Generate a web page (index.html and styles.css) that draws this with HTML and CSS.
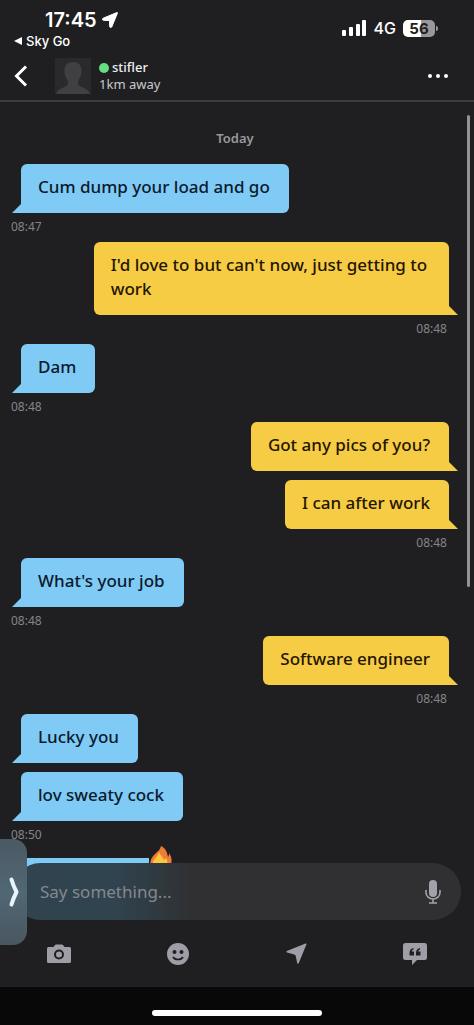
FILE: index.html
```html
<!DOCTYPE html>
<html lang="en">
<head>
<meta charset="utf-8">
<meta name="viewport" content="width=device-width, initial-scale=1">
<title>Chat</title>
<link rel="stylesheet" href="styles.css">
</head>
<body>
<div class="app">
  <header class="header">
    <div class="status">
      <div class="status-left">
        <div class="clock">17:45
          <svg width="16" height="16" viewBox="0 0 16 16" aria-hidden="true"><path d="M15.400 1.200 9.800 14.800c-.5 1.200-2 1-2.100-.3L7.500 8.500 1.500 8.300C.200 8.200 0 6.700 1.200 6.200L14.800.600c.5-.2.800.1.600.600z" fill="#fff" stroke="#fff" stroke-width="1" stroke-linejoin="round"/></svg>
        </div>
        <a class="return" href="#"><svg width="8" height="8" viewBox="0 0 8 8" aria-hidden="true"><path d="M8 0v8L0 4z" fill="#fff"/></svg>Sky Go</a>
      </div>
      <div class="status-right">
        <svg width="25" height="16" viewBox="0 0 25 16" aria-hidden="true"><g fill="#fff"><rect x="0" y="10" width="4" height="6" rx="1"/><rect x="7" y="7" width="4" height="9" rx="1"/><rect x="14" y="4" width="4" height="12" rx="1"/><rect x="20" y="0" width="4" height="16" rx="1"/></g></svg>
        <span class="network">4G</span>
        <span class="battery">56</span>
      </div>
    </div>
    <div class="nav">
      <button class="icon-button back" aria-label="Back"><svg width="14" height="22" viewBox="0 0 14 22"><path d="M12 1.500 2.500 11l9.500 9.500" fill="none" stroke="#fff" stroke-width="3"/></svg></button>
      <div class="avatar"><svg width="36" height="36" viewBox="0 0 36 36" aria-hidden="true"><path d="M18 4c-6 0-9 4-8.500 10 .2 2.500 1 5 2.500 7 1 2 1.500 5 0 6.500C9 30 3 30 1 36h34c-2-6-8-6-11-8.500-1.500-1.500-1-4.500 0-6.500 1.500-2 2.300-4.500 2.500-7C27 8 24 4 18 4z" fill="#404042"/></svg></div>
      <div class="person">
        <div class="name"><span class="online"></span>stifler</div>
        <div class="distance">1km away</div>
      </div>
      <button class="icon-button" aria-label="More"><svg width="22" height="6" viewBox="0 0 22 6"><g fill="#fff"><circle cx="3" cy="3" r="2"/><circle cx="11" cy="3" r="2"/><circle cx="19" cy="3" r="2"/></g></svg></button>
    </div>
  </header>

  <main class="chat">
    <h2 class="day">Today</h2>
    <section class="group received"><p class="bubble">Cum dump your load and go</p><time class="time">08:47</time></section>
    <section class="group sent"><p class="bubble">I'd love to but can't now, just getting to work</p><time class="time">08:48</time></section>
    <section class="group received"><p class="bubble">Dam</p><time class="time">08:48</time></section>
    <section class="group sent"><p class="bubble">Got any pics of you?</p><p class="bubble">I can after work</p><time class="time">08:48</time></section>
    <section class="group received"><p class="bubble">What's your job</p><time class="time">08:48</time></section>
    <section class="group sent"><p class="bubble">Software engineer</p><time class="time">08:48</time></section>
    <section class="group received"><p class="bubble">Lucky you</p><p class="bubble">lov sweaty cock</p><time class="time">08:50</time></section>
    <section class="group received reacted">
      <div class="bubble covered">
        <svg class="flame" width="22" height="26" viewBox="0 0 22 26" aria-hidden="true"><path d="M11 0c4 2 6 5 7 11 1-1 1-3 1-4 3 4 3 8 2 12-1 4-5 7-10 7S1 23 .500 19C0 14 2 11 5 8c3-3 5-4 6-8z" fill="#ef7c36"/><path d="M9 6c1 3 4 5 5 8l2-2c3 5 2 13-5 13C5 25 2 21 3 16c1-4 5-5 6-10z" fill="#fbc640"/></svg>
      </div>
    </section>
    <div class="scrollbar"></div>
  </main>

  <footer class="composer">
    <div class="field">
      <input class="message" type="text" placeholder="Say something..." aria-label="Message">
      <button class="icon-button" aria-label="Record"><svg width="16" height="24" viewBox="0 0 16 24"><rect x="4" y="0" width="8" height="17" rx="4" fill="#a3a2aa"/><path d="M1 10v2.500a7 6.500 0 0 0 14 0V10M8 19v4M4 23h8" fill="none" stroke="#a3a2aa" stroke-width="1.600"/></svg></button>
    </div>
    <div class="tools">
      <button class="icon-button" aria-label="Camera"><svg width="24" height="20" viewBox="0 0 24 20"><path fill="#9f9ea6" fill-rule="evenodd" d="M1.500 3H6.500L8 1Q8.500.500 9.200.500H14.800Q15.500.500 16 1L17.500 3H22.500Q24 3 24 4.500V17.500Q24 19 22.500 19H1.500Q0 19 0 17.500V4.500Q0 3 1.500 3zM12 5.500a5 5 0 1 0 0 10 5 5 0 0 0 0-10zm0 2a3 3 0 1 1 0 6 3 3 0 0 1 0-6z"/></svg></button>
      <button class="icon-button" aria-label="Stickers"><svg width="22" height="22" viewBox="0 0 22 22"><circle cx="11" cy="11" r="11" fill="#9f9ea6"/><circle cx="7.500" cy="9" r="2" fill="#1f1f21"/><circle cx="14.500" cy="9" r="2" fill="#1f1f21"/><path d="M6 14c2 3.300 8 3.300 10 0" fill="none" stroke="#1f1f21" stroke-width="1.700"/></svg></button>
      <button class="icon-button" aria-label="Location"><svg width="21" height="21" viewBox="0 0 21 21"><path d="M20.500 1.200 12.800 20c-.4.900-1.400.9-1.600-.1L9.800 13.200c-.2-.9-.6-1.500-1.500-1.800L1 9.600c-.9-.2-.9-1.100-.1-1.500L19.500.500c.8-.3 1.200.1 1 .700z" fill="#9f9ea6"/></svg></button>
      <button class="icon-button" aria-label="Saved phrases"><svg width="24" height="22" viewBox="0 0 24 22"><path d="M2.500 0h19Q24 0 24 2.500v12Q24 17 21.500 17H14l-5 5v-5H2.500Q0 17 0 14.500v-12Q0 0 2.500 0z" fill="#9f9ea6"/><path d="M10.500 5C7.500 5.500 6.500 7.500 6.500 10v2.500H11V8.500H8.800c0-1 .7-1.800 1.700-2zM17 5c-3 .5-4 2.500-4 5v2.500h4.500V8.500h-2.200c0-1 .7-1.800 1.700-2z" fill="#1f1f21"/></svg></button>
    </div>
    <button class="side-tab" aria-label="Show panel"><svg width="10" height="30" viewBox="0 0 10 30"><path d="M2.500 2.500Q4 8 7.500 15 4 22 2.500 27.500" fill="none" stroke="#e8f4fc" stroke-width="4" stroke-linecap="round" stroke-linejoin="round"/></svg></button>
  </footer>
  <div class="home"><div class="home-bar"></div></div>
</div>
</body>
</html>
```
FILE: styles.css
```css
* { box-sizing: border-box; }

body {
  margin: 0;
  background: #1f1f21;
  color: #fff;
  font-family: "Noto Sans", sans-serif;
}

.app {
  display: flex;
  flex-direction: column;
  height: 100vh;
  overflow: hidden;
}

.icon-button {
  display: flex;
  align-items: center;
  justify-content: center;
  padding: 0;
  border: 0;
  background: none;
}

.header {
  flex: none;
  border-bottom: 2px solid #3c3c3e;
}

.status {
  display: flex;
  justify-content: space-between;
  height: 52px;
  padding: 8px 39px 0 14px;
  font-family: Inter, sans-serif;
}

.clock {
  display: flex;
  align-items: center;
  gap: 5px;
  padding-left: 31px;
  font-size: 20px;
  font-weight: 600;
  line-height: 24px;
}

.return {
  display: flex;
  align-items: center;
  gap: 4px;
  color: #fff;
  font-size: 13px;
  font-weight: 500;
  line-height: 18px;
  text-decoration: none;
}

.status-right {
  display: flex;
  align-items: center;
  gap: 7px;
  height: 40px;
}

.network {
  font-size: 16px;
  font-weight: 500;
}

.battery {
  position: relative;
  width: 32px;
  border-radius: 5px;
  background: linear-gradient(90deg, #fff 56%, #98989b 56%);
  color: #1f1f21;
  font-size: 15px;
  font-weight: 700;
  line-height: 17px;
  text-align: center;
}

.battery::after {
  content: "";
  position: absolute;
  top: 6px;
  right: -3px;
  width: 2px;
  height: 5px;
  border-radius: 0 2px 2px 0;
  background: #98989b;
}

.nav {
  display: flex;
  align-items: center;
  height: 48px;
  padding: 0 25px 0 14px;
}

.back { width: 14px; margin-right: 27px; }

.avatar {
  display: flex;
  width: 36px;
  height: 36px;
  background: #2a2a2c;
}

.person {
  flex: 1;
  padding-left: 8px;
  font-size: 13px;
  line-height: 17px;
}

.name {
  display: flex;
  align-items: center;
  gap: 3px;
  font-weight: 500;
  color: #f0f0f2;
}

.online {
  width: 10px;
  height: 10px;
  border-radius: 50%;
  background: #66e07f;
}

.distance { color: #c9c9cc; }

.chat {
  position: relative;
  display: flex;
  flex: 1;
  flex-direction: column;
  min-height: 0;
  padding: 26px 25px 0 21px;
  overflow: hidden;
}

.day {
  flex: none;
  margin: 0 0 16px;
  color: #98979d;
  font-size: 13px;
  font-weight: 600;
  line-height: 20px;
  text-align: center;
}

.group {
  display: flex;
  flex: none;
  flex-direction: column;
  align-items: flex-start;
}

.sent { align-items: flex-end; }

.bubble {
  position: relative;
  max-width: 83%;
  margin: 0;
  padding: 11px 19px 14px 17px;
  border-radius: 6px;
  background: #80caf6;
  color: #0a1a2b;
  font-size: 17px;
  font-weight: 500;
  line-height: 24px;
}

.bubble + .bubble { margin-top: 9px; }

.received .bubble { border-bottom-left-radius: 0; }

.sent .bubble {
  border-bottom-right-radius: 0;
  background: #f7cc45;
  color: #241600;
}

.bubble::after {
  content: "";
  position: absolute;
  bottom: 0;
  width: 9px;
  height: 9px;
  background: inherit;
}

.received .bubble::after {
  right: 100%;
  clip-path: polygon(100% 0, 100% 100%, 0 100%);
}

.sent .bubble::after {
  left: 100%;
  clip-path: polygon(0 0, 100% 100%, 0 100%);
}

.time {
  height: 29px;
  padding-top: 5px;
  color: #858489;
  font-size: 12px;
  line-height: 18px;
}

.received .time { margin-left: -10px; }
.sent .time { margin-right: 2px; }

.reacted { padding-top: 8px; }

.covered {
  width: 128px;
  height: 49px;
  border-radius: 0;
}

.flame {
  position: absolute;
  top: -12px;
  right: -23px;
}

.scrollbar {
  position: absolute;
  top: 13px;
  right: 4px;
  width: 3px;
  height: 472px;
  border-radius: 2px;
  background: #929294;
}

.composer {
  position: relative;
  flex: none;
  margin-top: -57px;
}

.field {
  display: flex;
  align-items: center;
  height: 57px;
  margin: 0 13px 0 12px;
  padding: 0 20px 0 28px;
  border-radius: 29px;
  background: linear-gradient(90deg, #30434f 0%, #304450 22%, #2f3b42 31%, #303032 40%);
}

.message {
  flex: 1;
  min-width: 0;
  padding: 0;
  border: 0;
  outline: 0;
  background: none;
  color: #fff;
  font-family: inherit;
  font-size: 17px;
}

.message::placeholder {
  color: #85888e;
  opacity: 1;
}

.tools {
  display: grid;
  grid-template-columns: repeat(4, 1fr);
  height: 67px;
  background: #1f1f21;
}

.side-tab {
  position: absolute;
  bottom: 42px;
  left: 0;
  display: flex;
  align-items: center;
  justify-content: center;
  width: 27px;
  height: 106px;
  padding: 0;
  border: 0;
  border-radius: 0 14px 14px 0;
  background: linear-gradient(#4b5a64, #506774 50%, #4a5760);
}

.home {
  display: flex;
  flex: none;
  justify-content: center;
  height: 38px;
  padding-top: 23px;
  background: #080808;
}

.home-bar {
  width: 36%;
  height: 6px;
  border-radius: 3px;
  background: #fff;
}
```
